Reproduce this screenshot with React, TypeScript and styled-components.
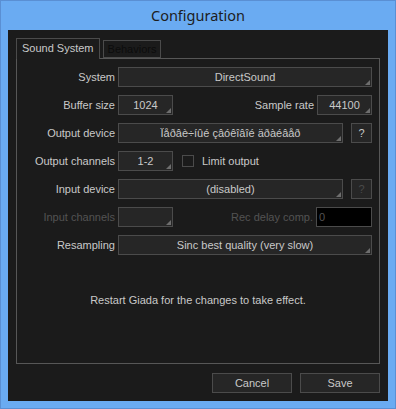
import React from 'react';
import styled, { createGlobalStyle } from 'styled-components';

const GlobalStyle = createGlobalStyle`
  html, body {
    margin: 0;
    padding: 0;
    background: #6aabf2;
  }
  * {
    box-sizing: border-box;
  }
`;

const FIELD_BG = '#262626';
const FIELD_BORDER = '#4b4b4b';
const TEXT = '#c9c9c9';
const DIM = '#535353';

export default function App() {
  return (
    <>
      <GlobalStyle />
      <Window>
        <TitleBar>Configuration</TitleBar>
        <Client>
          <TabStrip>
            <Tab active>Sound System</Tab>
            <Tab>Behaviors</Tab>
          </TabStrip>
          <Panel>
            <Row>
              <Label>System</Label>
              <Choice grow>DirectSound</Choice>
            </Row>
            <Row>
              <Label>Buffer size</Label>
              <Choice>1024</Choice>
              <Spacer />
              <SideLabel>Sample rate</SideLabel>
              <Choice>44100</Choice>
            </Row>
            <Row>
              <Label>Output device</Label>
              <Choice grow>Ïåðâè÷íûé çâóêîâîé äðàéâåð</Choice>
              <HelpButton>?</HelpButton>
            </Row>
            <Row>
              <Label>Output channels</Label>
              <Choice>1-2</Choice>
              <Check />
              <CheckText>Limit output</CheckText>
            </Row>
            <Row>
              <Label>Input device</Label>
              <Choice grow>(disabled)</Choice>
              <HelpButton disabled>?</HelpButton>
            </Row>
            <Row>
              <Label disabled>Input channels</Label>
              <Choice />
              <Spacer />
              <SideLabel disabled>Rec delay comp.</SideLabel>
              <DelayInput>0</DelayInput>
            </Row>
            <Row>
              <Label>Resampling</Label>
              <Choice grow>Sinc best quality (very slow)</Choice>
            </Row>
            <Notice>Restart Giada for the changes to take effect.</Notice>
          </Panel>
          <ButtonBar>
            <Button>Cancel</Button>
            <Button>Save</Button>
          </ButtonBar>
        </Client>
      </Window>
    </>
  );
}

const Window = styled.div`
  width: 396px;
  height: 409px;
  display: flex;
  flex-direction: column;
  background: #6aabf2;
  border: 1px solid #5a8fd3;
  padding: 0 7px 7px 7px;
`;

const TitleBar = styled.div`
  height: 30px;
  display: flex;
  align-items: center;
  justify-content: center;
  padding-bottom: 1px;
  font-family: 'Noto Sans', 'Open Sans', sans-serif;
  font-size: 14.5px;
  color: #1d1d1d;
`;

const Client = styled.div`
  flex: 1;
  display: flex;
  flex-direction: column;
  background: #1b1b1b;
  padding: 8px 8px 8px 8px;
  font-family: 'Liberation Sans', Arial, sans-serif;
  font-size: 11px;
  color: ${TEXT};
`;

const TabStrip = styled.div`
  display: flex;
  align-items: flex-end;
  gap: 3px;
  height: 20px;
  position: relative;
  z-index: 1;
`;

const Tab = styled.div<{ active?: boolean }>`
  height: ${({ active }) => (active ? '21px' : '18px')};
  margin-bottom: ${({ active }) => (active ? '-1px' : '0')};
  padding: 0 ${({ active }) => (active ? '5px' : '4px')};
  display: flex;
  align-items: center;
  border: 1px solid ${FIELD_BORDER};
  border-bottom: ${({ active }) => (active ? 'none' : `1px solid ${FIELD_BORDER}`)};
  background: #1b1b1b;
  color: ${({ active }) => (active ? TEXT : '#0c0c0c')};
  padding-bottom: ${({ active }) => (active ? '2px' : '0')};
`;

const Panel = styled.div`
  height: 306px;
  border: 1px solid #575757;
  width: 364px;
  padding: 8px 7px 0 0;
  display: flex;
  flex-direction: column;
  gap: 8px;
`;

const Row = styled.div`
  display: flex;
  align-items: center;
  height: 20px;
`;

const Label = styled.div<{ disabled?: boolean }>`
  width: 98px;
  margin-right: 3px;
  text-align: right;
  white-space: nowrap;
  color: ${({ disabled }) => (disabled ? DIM : TEXT)};
`;

const SideLabel = styled.div<{ disabled?: boolean }>`
  margin-right: 3px;
  white-space: nowrap;
  color: ${({ disabled }) => (disabled ? DIM : TEXT)};
`;

const Spacer = styled.div`
  flex: 1;
`;

const Choice = styled.div<{ grow?: boolean }>`
  position: relative;
  height: 20px;
  ${({ grow }) => (grow ? 'flex: 1;' : 'width: 55px;')}
  display: flex;
  align-items: center;
  justify-content: center;
  background: ${FIELD_BG};
  border: 1px solid ${FIELD_BORDER};
  white-space: nowrap;
  color: ${TEXT};

  &::after {
    content: '';
    position: absolute;
    right: 1px;
    bottom: 1px;
    border-style: solid;
    border-width: 0 0 5px 5px;
    border-color: transparent transparent #6e6e6e transparent;
  }
`;

const HelpButton = styled.div<{ disabled?: boolean }>`
  width: 21px;
  height: 20px;
  margin-left: 8px;
  display: flex;
  align-items: center;
  justify-content: center;
  background: ${FIELD_BG};
  border: 1px solid ${FIELD_BORDER};
  color: ${({ disabled }) => (disabled ? '#4a4a4a' : TEXT)};
`;

const Check = styled.div`
  width: 12px;
  height: 12px;
  margin-left: 9px;
  border: 1px solid ${FIELD_BORDER};
  background: #1b1b1b;
`;

const CheckText = styled.div`
  margin-left: 8px;
`;

const DelayInput = styled.div`
  width: 56px;
  height: 20px;
  background: #000;
  border: 1px solid ${FIELD_BORDER};
  display: flex;
  align-items: center;
  padding-left: 2px;
  color: ${DIM};
`;

const Notice = styled.div`
  margin-top: 31px;
  padding-left: 7px;
  text-align: center;
`;

const ButtonBar = styled.div`
  display: flex;
  justify-content: flex-end;
  gap: 8px;
  margin-top: 9px;
`;

const Button = styled.div`
  width: 80px;
  height: 20px;
  display: flex;
  align-items: center;
  justify-content: center;
  background: ${FIELD_BG};
  border: 1px solid ${FIELD_BORDER};
`;
